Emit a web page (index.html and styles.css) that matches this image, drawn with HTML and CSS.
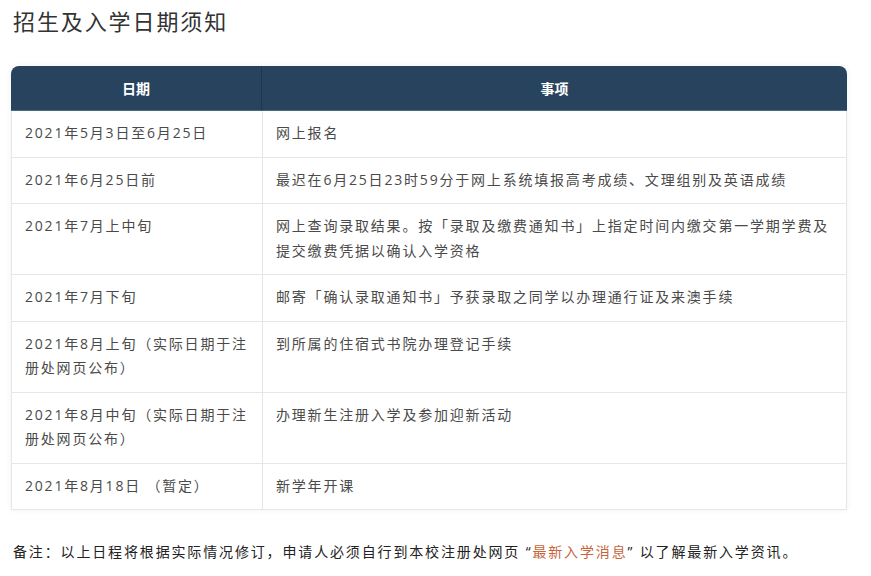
FILE: index.html
```html
<!DOCTYPE html>
<html lang="zh-CN">
<head>
<meta charset="utf-8">
<title>招生及入学日期须知</title>
<link rel="stylesheet" href="styles.css">
</head>
<body>
<h1 class="title">招生及入学日期须知</h1>
<div class="table-wrap">
<table class="schedule">
<thead>
<tr><th class="col-date">日期</th><th>事项</th></tr>
</thead>
<tbody>
<tr><td>2021年5月3日至6月25日</td><td>网上报名</td></tr>
<tr><td>2021年6月25日前</td><td>最迟在6月25日23时59分于网上系统填报高考成绩、文理组别及英语成绩</td></tr>
<tr><td>2021年7月上中旬</td><td>网上查询录取结果。按「录取及缴费通知书」上指定时间内缴交第一学期学费及提交缴费凭据以确认入学资格</td></tr>
<tr><td>2021年7月下旬</td><td>邮寄「确认录取通知书」予获录取之同学以办理通行证及来澳手续</td></tr>
<tr><td>2021年8月上旬（实际日期于注册处网页公布）</td><td>到所属的住宿式书院办理登记手续</td></tr>
<tr><td>2021年8月中旬（实际日期于注册处网页公布）</td><td>办理新生注册入学及参加迎新活动</td></tr>
<tr><td>2021年8月18日 （暂定）</td><td>新学年开课</td></tr>
</tbody>
</table>
</div>
<p class="note">备注：以上日程将根据实际情况修订，申请人必须自行到本校注册处网页 “<a class="link" href="#">最新入学消息</a>” 以了解最新入学资讯。</p>
</body>
</html>
```

FILE: styles.css
```css
html, body {
  margin: 0;
  padding: 0;
  background: #ffffff;
}
body {
  font-family: "Open Sans", "Noto Sans CJK SC", sans-serif;
  color: #333333;
  padding: 0 12px;
}
.title {
  font-family: "Noto Sans CJK SC", sans-serif;
  font-size: 22px;
  font-weight: 400;
  line-height: 28px;
  letter-spacing: 1.9px;
  margin: 6px 0 0 1px;
  color: #333333;
}
.table-wrap {
  margin: 32px 0 0 -1px;
  width: 836px;
  border-radius: 8px 8px 0 0;
  box-shadow: 0 0 6px rgba(0, 0, 0, 0.06);
}
.schedule {
  width: 836px;
  border-collapse: separate;
  border-spacing: 0;
  table-layout: fixed;
  font-size: 14px;
  letter-spacing: 1.8px;
}
.schedule th {
  background: #27435e;
  color: #ffffff;
  font-weight: 700;
  height: 44px;
  padding: 0;
  text-align: center;
  border-bottom: 1px solid #4d6984;
  font-family: "Noto Sans CJK SC", sans-serif;
  letter-spacing: 0;
}
.schedule th.col-date {
  width: 250px;
  border-right: 1px solid #1f3850;
  border-top-left-radius: 8px;
}
.schedule th:last-child {
  border-top-right-radius: 8px;
}
.schedule td {
  padding: 10px 8px 11px 13px;
  line-height: 24.5px;
  vertical-align: top;
  color: #4a4a4a;
  border-bottom: 1px solid #e6e6e6;
  border-left: 1px solid #e6e6e6;
}
.schedule td:last-child {
  border-right: 1px solid #e6e6e6;
  padding-left: 13px;
  padding-right: 12px;
}
.note {
  margin: 30px 0 0 1px;
  font-size: 14px;
  line-height: 24px;
  letter-spacing: 1.85px;
  color: #222222;
}
.link {
  color: #c8643c;
  text-decoration: none;
}
```
